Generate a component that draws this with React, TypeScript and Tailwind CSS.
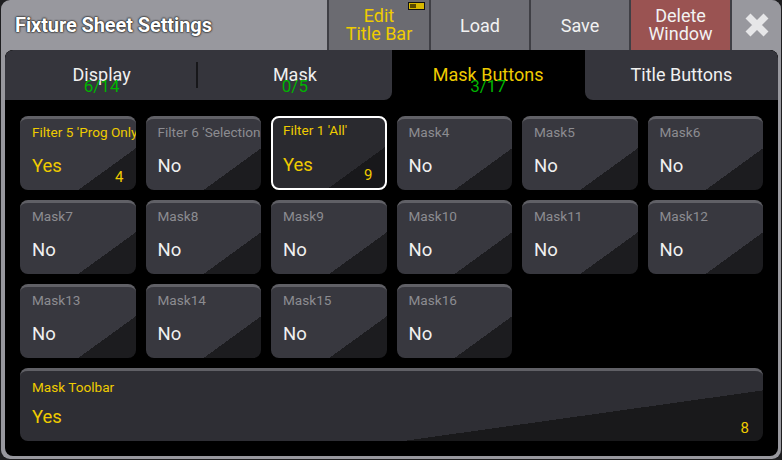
type Cell = {
  label: string;
  value: string;
  on?: boolean;
  count?: string;
  selected?: boolean;
};

const cells: Cell[] = [
  { label: "Filter 5 'Prog Only'", value: "Yes", on: true, count: "4" },
  { label: "Filter 6 'Selection Only'", value: "No" },
  { label: "Filter 1 'All'", value: "Yes", on: true, count: "9", selected: true },
  { label: "Mask4", value: "No" },
  { label: "Mask5", value: "No" },
  { label: "Mask6", value: "No" },
  { label: "Mask7", value: "No" },
  { label: "Mask8", value: "No" },
  { label: "Mask9", value: "No" },
  { label: "Mask10", value: "No" },
  { label: "Mask11", value: "No" },
  { label: "Mask12", value: "No" },
  { label: "Mask13", value: "No" },
  { label: "Mask14", value: "No" },
  { label: "Mask15", value: "No" },
  { label: "Mask16", value: "No" },
];

const tabs = [
  { label: "Display", count: "6/14" },
  { label: "Mask", count: "0/5" },
  { label: "Mask Buttons", count: "3/17", active: true },
  { label: "Title Buttons" },
];

function MaskCell({ cell }: { cell: Cell }) {
  return (
    <div
      className={
        "relative h-[74px] rounded-[8px] overflow-hidden " +
        (cell.selected
          ? "border-2 border-white bg-[linear-gradient(144deg,#2a2a2f_73%,#18181b_73%)]"
          : "border-t-[3px] border-[#606066] bg-[linear-gradient(144deg,#38383f_73%,#1c1c1f_73%)]")
      }
    >
      <div
        className={
          "whitespace-nowrap text-[13.6px] leading-4 " +
          (cell.selected ? "pl-[10px] pt-[4px] " : "pl-3 pt-[5px] ") +
          (cell.on ? "text-[#efcb00]" : "text-[#8c8c91]")
        }
      >
        {cell.label}
      </div>
      <div
        className={
          "text-[18.5px] leading-6 " +
          (cell.selected ? "pl-[10px] mt-[15px] " : "pl-3 mt-[14px] ") +
          (cell.on ? "text-[#efcb00]" : "text-[#f0f0f0]")
        }
      >
        {cell.value}
      </div>
      {cell.count && (
        <span className="absolute right-[12px] bottom-[3px] text-[15px] leading-5 text-[#efcb00]">
          {cell.count}
        </span>
      )}
    </div>
  );
}

export default function App() {
  return (
    <div
      className="w-[782px] h-[460px] bg-[#1e1e20] pl-[1px] pb-[1px] overflow-hidden"
      style={{ fontFamily: "Roboto, 'Liberation Sans', sans-serif" }}
    >
      <div className="w-[780px] h-[459px] bg-[#98989e] rounded-[9px] flex flex-col overflow-hidden">
        {/* title bar */}
        <div className="h-[50px] flex">
          <div className="w-[326px] flex items-center pl-[14px]">
            <span className="text-white font-bold text-[20px] tracking-[-0.1px] [text-shadow:0_0_2px_#222,0_0_2px_#222,0_0_1px_#000]">
              Fixture Sheet Settings
            </span>
          </div>
          <div className="flex-1 flex bg-[#3f3f45] pl-[2px] gap-[2px]">
            <div className="relative w-[100px] bg-[#6b6b71] flex flex-col items-center justify-center text-[#efcb00] text-[18px] leading-[18px]">
              <svg className="absolute right-[4px] top-[2px]" width="17" height="8" viewBox="0 0 17 8">
                <rect x="0.5" y="0.5" width="16" height="7" fill="#d8b800" stroke="#111" />
                <rect x="2" y="2" width="6" height="4" fill="#5a4a00" />
              </svg>
              <span>Edit</span>
              <span>Title Bar</span>
            </div>
            <div className="w-[98px] bg-[#6e6e75] flex items-center justify-center text-[#f2f2f2] text-[18px]">
              Load
            </div>
            <div className="w-[98px] bg-[#6e6e75] flex items-center justify-center text-[#f2f2f2] text-[18px]">
              Save
            </div>
            <div className="w-[99px] bg-[#9a5352] flex flex-col items-center justify-center text-[#f2f2f2] text-[18px] leading-[18px]">
              <span>Delete</span>
              <span>Window</span>
            </div>
            <div className="flex-1 bg-[#98989e] flex items-center justify-center">
              <svg width="28" height="28" viewBox="0 0 28 28">
                <path d="M5 5 L23 23 M23 5 L5 23" stroke="#e6e6e8" strokeWidth="7" strokeLinecap="butt" />
              </svg>
            </div>
          </div>
        </div>

        {/* body */}
        <div className="flex-1 ml-[4px] mr-[3px] mb-[3px] bg-black rounded-[8px] flex flex-col overflow-hidden">
          <div className="h-[50px] flex bg-black rounded-t-[8px] overflow-hidden">
            {tabs.map((t, i) => (
              <div
                key={t.label}
                className={
                  "relative flex-1 flex items-center justify-center text-[18px] " +
                  (t.active ? "bg-black text-[#efcb00] " : "bg-[#35353c] text-[#f0f0f0] ") +
                  (i === 1 ? "rounded-br-[8px] " : "") +
                  (i === 3 ? "rounded-bl-[8px] " : "")
                }
              >
                {i === 0 && (
                  <div className="absolute right-0 top-[12px] h-[26px] w-[2px] bg-[#17171a]" />
                )}
                <span className="-mt-[1px]">{t.label}</span>
                {t.count && (
                  <span className="absolute left-0 right-0 top-[26px] text-center text-[17px] leading-5 text-[#00b400]">
                    {t.count}
                  </span>
                )}
              </div>
            ))}
          </div>

          <div className="flex-1 px-[15px] pt-[16px] flex flex-col gap-[10px]">
            <div className="grid grid-cols-6 gap-x-[10px] gap-y-[10px]">
              {cells.map((c) => (
                <MaskCell key={c.label} cell={c} />
              ))}
            </div>
            <div className="relative h-[73px] rounded-[8px] overflow-hidden border-t-[3px] border-[#606066] bg-[linear-gradient(172deg,#2e2e34_71%,#19191b_71%)]">
              <div className="pl-3 pt-[8px] text-[13.6px] leading-4 text-[#efcb00]">Mask Toolbar</div>
              <div className="pl-3 mt-[10px] text-[18.5px] leading-6 text-[#efcb00]">Yes</div>
              <span className="absolute right-[14px] bottom-[3px] text-[15px] leading-5 text-[#efcb00]">8</span>
            </div>
          </div>
        </div>
      </div>
    </div>
  );
}
